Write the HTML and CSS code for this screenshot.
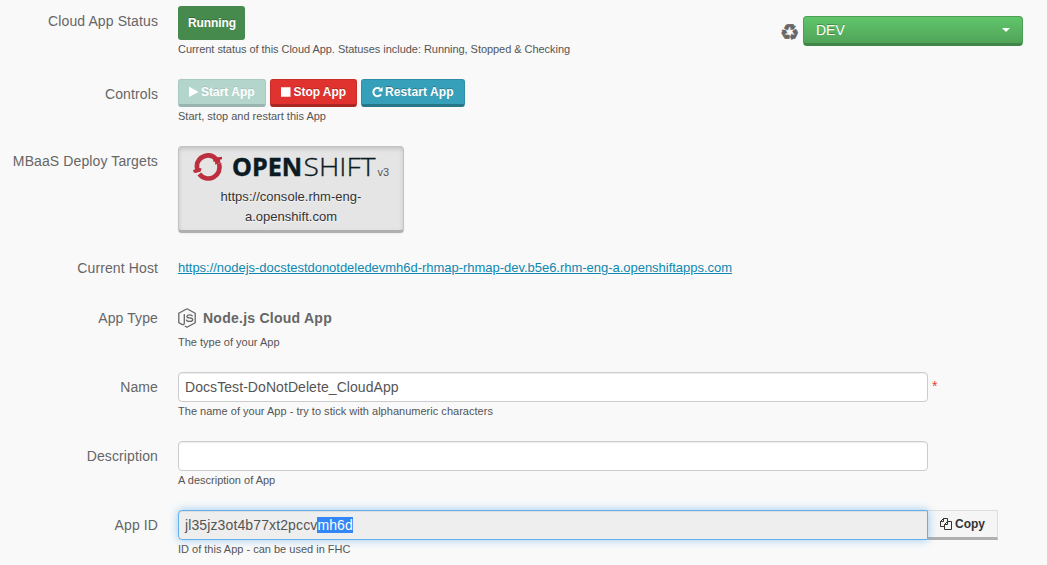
FILE: index.html
```html
<!DOCTYPE html>
<html lang="en">
<head>
<meta charset="utf-8">
<title>Cloud App Details</title>
<link rel="stylesheet" href="styles.css">
</head>
<body>
<main class="form">
  <section class="row">
    <div class="label">Cloud App Status</div>
    <div class="field">
      <div class="status">Running</div>
      <div class="help status-help">Current status of this Cloud App. Statuses include: Running, Stopped &amp; Checking</div>
    </div>
    <div class="env">
      <span class="recycle">♻</span>
      <button class="env-select"><span>DEV</span><i class="caret"></i></button>
    </div>
  </section>

  <section class="row">
    <div class="label">Controls</div>
    <div class="field">
      <div class="buttons">
        <button class="btn start"><svg width="10" height="12" viewBox="0 0 10 12"><path fill="#fff" d="M0 .5 9.500 6 0 11z"/></svg>Start App</button>
        <button class="btn stop"><svg width="10" height="12" viewBox="0 0 10 12"><path fill="#fff" d="M0 1h10v10H0z"/></svg>Stop App</button>
        <button class="btn restart"><svg width="11" height="12" viewBox="0 0 11 12"><path fill="none" stroke="#fff" stroke-width="2" d="M8.200 3A4.100 4.100 0 1 0 9 8.200"/><path fill="#fff" d="M10.600 1v4.500H6.100z"/></svg>Restart App</button>
      </div>
      <div class="help">Start, stop and restart this App</div>
    </div>
  </section>

  <section class="row">
    <div class="label">MBaaS Deploy Targets</div>
    <div class="field">
      <div class="target">
        <svg class="logo" width="198" height="32" viewBox="0 0 198 32">
          <g fill="none" stroke="#bc2f3e" stroke-width="4.600">
            <path d="M4.800 17A11.300 11.300 0 0 1 24.200 10"/>
            <path d="M27 14.500A11.300 11.300 0 0 1 7.300 25"/>
          </g>
          <path fill="#bc2f3e" d="M21 9.500 25.500 8.200l4.500-.4v2.400l-2 .6.500 3.400-5.500 1.300.2-2.800-1.700.2zM2.500 17l5-.5-.3 2.500 2.300.2-.8 3.300-5 1.500-2-.5-.7-2.500 2-.6z"/>
          <text class="logo-bold" x="40" y="27" textLength="70" lengthAdjust="spacingAndGlyphs">OPEN</text>
          <text class="logo-light" x="111.500" y="27" textLength="72" lengthAdjust="spacingAndGlyphs">SHIFT</text>
          <text class="logo-version" x="185.500" y="27" textLength="11.500">v3</text>
        </svg>
        <div class="target-url">https://console.rhm-eng-<br>a.openshift.com</div>
      </div>
    </div>
  </section>

  <section class="row">
    <div class="label">Current Host</div>
    <div class="field"><a class="host" href="#">https://nodejs-docstestdonotdeledevmh6d-rhmap-rhmap-dev.b5e6.rhm-eng-a.openshiftapps.com</a></div>
  </section>

  <section class="row">
    <div class="label">App Type</div>
    <div class="field">
      <div class="app-type">
        <svg width="18" height="20" viewBox="0 0 18 20" fill="none" stroke="#666" stroke-width="1.300" stroke-linejoin="round"><path d="M9 .8 17.200 5.300v9.400L9 19.200l-2.200-1.200M9 .8.800 5.300v9.400L4 16.400q2.300.7 2.300-1.500V6"/><path d="M14.500 8.300q-.3-1.500-2.800-1.500T8.900 8.400q0 1.300 2.800 1.500 3 .3 3 1.800 0 1.700-3.100 1.700T8.400 11.600"/></svg>
        <span>Node.js Cloud App</span>
      </div>
      <div class="help">The type of your App</div>
    </div>
  </section>

  <section class="row">
    <div class="label">Name</div>
    <div class="field">
      <div class="input-line"><div class="input">DocsTest-DoNotDelete_CloudApp</div><span class="required">*</span></div>
      <div class="help name-help">The name of your App - try to stick with alphanumeric characters</div>
    </div>
  </section>

  <section class="row">
    <div class="label">Description</div>
    <div class="field">
      <div class="input"></div>
      <div class="help">A description of App</div>
    </div>
  </section>

  <section class="row">
    <div class="label">App ID</div>
    <div class="field">
      <div class="input-line">
        <div class="input focused">jl35jz3ot4b77xt2pccv<span class="selected">mh6d</span></div>
        <button class="copy"><svg width="12" height="12" viewBox="0 0 12 12" fill="none" stroke="#333" stroke-width="1"><path d="M4.500 8.500h-4v-5l3-3h4v3M3.500.5v3h-3M7.500 3.500h4v8h-7v-5zM7.500 3.500v3h-3"/></svg>Copy</button>
      </div>
      <div class="help">ID of this App - can be used in FHC</div>
    </div>
  </section>
</main>
</body>
</html>
```
FILE: styles.css
```css
* { box-sizing: border-box; }

body {
  margin: 0;
  height: 565px;
  overflow: hidden;
  background: #f9f9f9;
  color: #666;
  font: 14px/20px "Liberation Sans", Arial, sans-serif;
}

button { margin: 0; font-family: inherit; }

.form { padding: 6px 24px 0 0; }

.row {
  display: grid;
  grid-template-columns: 158px 1fr auto;
  column-gap: 20px;
  margin-bottom: 20px;
}

.label { padding-top: 5px; letter-spacing: .11px; text-align: right; white-space: nowrap; }

.help { font-size: 11px; line-height: 19px; color: #555; }
.status-help { letter-spacing: -.045px; }
.name-help { letter-spacing: .02px; }

.status {
  width: 67px;
  height: 34px;
  padding-left: 10px;
  border-radius: 3px;
  background: #478a4e;
  color: #fff;
  font-size: 12px;
  font-weight: bold;
  letter-spacing: -.1px;
  line-height: 34px;
  text-shadow: 0 -1px 0 rgba(0, 0, 0, .25);
}

.env { display: flex; gap: 4px; height: 40px; padding-top: 10px; }

.recycle {
  width: 19px;
  padding-top: 7px;
  font: 22px/20px "DejaVu Sans", sans-serif;
  text-align: center;
  -webkit-text-stroke: .5px #666;
}

.env-select {
  display: flex;
  justify-content: space-between;
  align-items: center;
  width: 220px;
  height: 30px;
  padding: 0 12px;
  border: 1px solid #4c9e53;
  border-bottom: 3px solid #41874a;
  border-radius: 4px;
  background: linear-gradient(#60c56a, #51a458);
  color: #fff;
  font-size: 14px;
  text-shadow: 0 -1px 0 rgba(0, 0, 0, .25);
}

.caret { border: 4px solid transparent; border-top-color: #fff; border-bottom: 0; }

.buttons { display: flex; gap: 4px; height: 28px; }

.btn {
  display: flex;
  align-items: center;
  gap: 3px;
  height: 28px;
  padding: 0 10px;
  border: 1px solid;
  border-bottom-width: 3px;
  border-radius: 3px;
  color: #fff;
  font-size: 12px;
  font-weight: bold;
  text-shadow: 0 -1px 0 rgba(0, 0, 0, .25);
  white-space: nowrap;
}

.start { width: 88px; gap: 2px; background: #b3d5cc; border-color: #a9c9c0 #a9c9c0 #9ab5af; text-shadow: 0 -1px 0 rgba(0, 0, 0, .1); }
.stop { width: 87px; background: #e0322e; border-color: #c92d29 #c92d29 #a82623; letter-spacing: -.05px; }
.restart { width: 104px; gap: 2px; background: #369fb9; border-color: #308fa6 #308fa6 #287789; letter-spacing: .1px; }

.target {
  width: 226px;
  height: 87px;
  padding: 2px 13px 0;
  border: 1px solid #c4c4c4;
  border-bottom: 3px solid #b0b0b0;
  border-radius: 4px;
  background: #e5e5e5;
  box-shadow: inset 0 2px 4px rgba(0, 0, 0, .15), 0 1px 2px rgba(0, 0, 0, .05);
}

.logo { display: block; margin-bottom: 6px; overflow: visible; }
.logo-bold { font: 700 25px "Open Sans", sans-serif; fill: #0c1b21; stroke: #0c1b21; stroke-width: .5px; }
.logo-light { font: 300 25px "Open Sans", sans-serif; fill: #0c1b21; stroke: #0c1b21; stroke-width: .3px; }
.logo-version { font: 11px "Liberation Sans", sans-serif; fill: #555; }

.target-url { color: #333; font-size: 13px; letter-spacing: .03px; text-align: center; text-shadow: 0 1px 1px rgba(255, 255, 255, .75); }

.host {
  display: block;
  width: max-content;
  height: 30px;
  padding-top: 5px;
  color: #0e88b1;
  font-size: 13px;
  letter-spacing: -.025px;
}

.app-type {
  display: flex;
  align-items: center;
  gap: 7px;
  height: 30px;
  font-weight: bold;
  letter-spacing: .25px;
}

.input-line { display: flex; }

.input {
  width: 750px;
  height: 30px;
  padding: 4px 6px;
  border: 1px solid #ccc;
  border-radius: 4px;
  background: #fff;
  color: #555;
  letter-spacing: .07px;
  box-shadow: inset 0 1px 1px rgba(0, 0, 0, .075);
}

.focused {
  z-index: 1;
  border-color: #66afe9;
  border-radius: 4px 0 0 4px;
  background: #eee;
  letter-spacing: .12px;
  box-shadow: inset 0 1px 1px rgba(0, 0, 0, .075), 0 0 8px rgba(82, 168, 236, .6);
}

.selected { background: #3286f6; color: #fff; }

.required { padding: 4px 0 0 4px; color: #ee3b33; font-size: 14px; line-height: 20px; }

.copy {
  display: flex;
  align-items: center;
  gap: 3px;
  width: 70px;
  height: 30px;
  padding: 0 12px;
  border: 1px solid #ddd;
  border-bottom: 3px solid #b0b0b0;
  border-left: 0;
  background: #f5f5f5;
  color: #333;
  font-size: 12px;
  font-weight: bold;
}
```
